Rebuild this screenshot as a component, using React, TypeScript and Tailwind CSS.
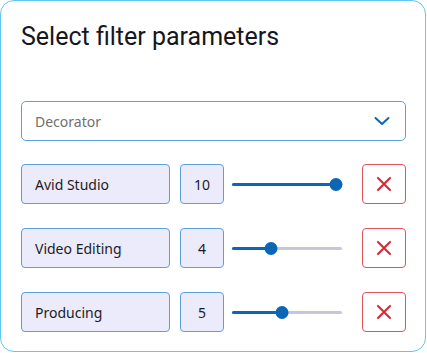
const rows = [
  { name: 'Avid Studio', value: 10 },
  { name: 'Video Editing', value: 4 },
  { name: 'Producing', value: 5 },
];

function Slider({ value, min = 1, max = 10 }: { value: number; min?: number; max?: number }) {
  const pct = (value - min) / (max - min);
  const left = 6 + pct * 98;
  return (
    <div className="relative w-[110px] h-[14px] flex items-center">
      <div className="w-full h-[3px] bg-[#c9c4e0] rounded-full" />
      <div className="absolute left-0 h-[3px] bg-[#0b66b5] rounded-full" style={{ width: left }} />
      <div
        className="absolute top-[1px] w-[13px] h-[13px] rounded-full bg-[#0b66b5] -translate-x-1/2"
        style={{ left }}
      />
    </div>
  );
}

export default function App() {
  return (
    <div className="w-[427px] h-[353px] bg-white">
      <div className="w-[426px] h-[352px] border border-[#64c6ee] rounded-[14px] pl-[20px] pr-[19px] pt-[21px] flex flex-col">
        <h1 className="text-[25px] leading-[30px] text-[#16161d] font-['Roboto',sans-serif]">
          Select filter parameters
        </h1>
        <div className="mt-[49px] h-[40px] border border-[#5d9fd8] rounded-[5px] flex items-center justify-between pl-[13px] pr-[15px] font-['Noto_Sans',sans-serif]">
          <span className="text-[14px] text-[#707070]">Decorator</span>
          <svg width="16" height="10" viewBox="0 0 16 10" fill="none">
            <path d="M1.5 2 L8 8 L14.5 2" stroke="#0b66b5" strokeWidth="2" strokeLinecap="round" strokeLinejoin="round" />
          </svg>
        </div>
        <div className="mt-[23px] flex flex-col gap-[24px] font-['Noto_Sans',sans-serif]">
          {rows.map((r) => (
            <div key={r.name} className="flex items-center h-[40px]">
              <div className="w-[149px] h-[40px] border border-[#5d9fd8] bg-[#ecebfc] rounded-[4px] flex items-center pl-[13px] text-[14px] text-[#1c1c24]">
                {r.name}
              </div>
              <div className="ml-[10px] w-[44px] h-[40px] border border-[#5d9fd8] bg-[#ecebfc] rounded-[4px] flex items-center justify-center text-[14px] text-[#1c1c24]">
                {r.value}
              </div>
              <div className="ml-[8px]">
                <Slider value={r.value} />
              </div>
              <button className="ml-[20px] w-[44px] h-[40px] border border-[#e2525a] rounded-[4px] flex items-center justify-center bg-white">
                <svg width="16" height="16" viewBox="0 0 16 16" fill="none">
                  <path d="M2 2 L14 14 M14 2 L2 14" stroke="#d7262f" strokeWidth="2" strokeLinecap="round" />
                </svg>
              </button>
            </div>
          ))}
        </div>
      </div>
    </div>
  );
}
